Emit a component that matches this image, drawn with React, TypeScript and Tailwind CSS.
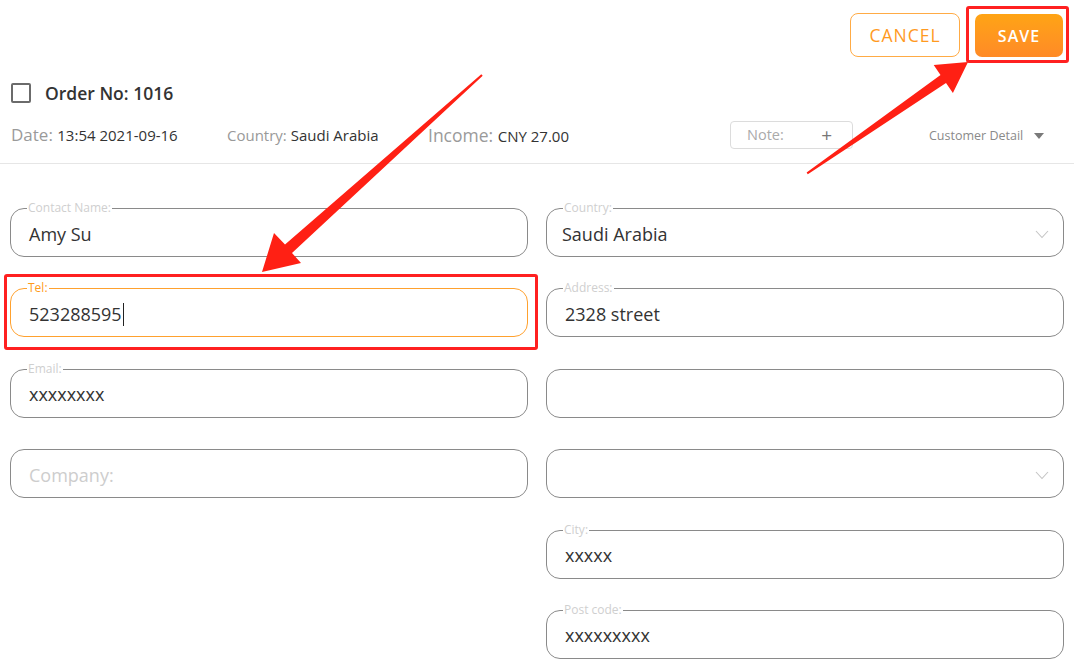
import React from "react";

type FieldProps = {
  label?: string;
  value?: string;
  placeholder?: string;
  active?: boolean;
  select?: boolean;
  caret?: boolean;
  pad?: string;
};

function Chevron() {
  return (
    <svg width="14" height="9" viewBox="0 0 14 9" className="ml-auto">
      <path d="M1 1 L7 7.5 L13 1" fill="none" stroke="#c4c4c4" strokeWidth="1.1" />
    </svg>
  );
}

function Field({ label, value, placeholder, active, select, caret, pad = "pl-[18px]" }: FieldProps) {
  return (
    <div
      className={`relative flex h-[49px] items-center rounded-[14px] border pt-[3px] ${pad} pr-[14px] ${
        active ? "border-[#ffa12e]" : "border-[#8a8a8a]"
      }`}
    >
      {label ? (
        <span
          className={`absolute left-[16px] top-[-8px] bg-white px-[1px] text-[12px] leading-[14px] ${
            active ? "text-[#ff9a1a]" : "text-[#cfcfcf]"
          }`}
        >
          {label}
        </span>
      ) : null}
      {value ? <span className="text-[18px] text-[#333]">{value}</span> : null}
      {caret ? <span className="ml-[1px] h-[23px] w-[1px] bg-[#222]" /> : null}
      {placeholder ? <span className="text-[18px] text-[#cdcdcd]">{placeholder}</span> : null}
      {select ? <Chevron /> : null}
    </div>
  );
}

export default function App() {
  return (
    <div
      className="relative h-[664px] w-[1074px] overflow-hidden bg-white"
      style={{ fontFamily: '"Open Sans", "Noto Sans", sans-serif' }}
    >
      {/* actions */}
      <div className="flex justify-end gap-[15px] pr-[11px] pt-[13px]">
        <button className="h-[44px] w-[110px] rounded-[8px] border border-[#ffab45] text-[17.5px] tracking-[1px] text-[#ff9a1f]">
          CANCEL
        </button>
        <button className="mt-[1px] h-[43px] w-[88px] rounded-[7px] bg-gradient-to-b from-[#ffa414] to-[#ff8a26] text-[16px] font-semibold tracking-[1px] text-white">
          SAVE
        </button>
      </div>

      {/* order header */}
      <div className="mt-[26px] flex h-[20px] items-center pl-[11px]">
        <span className="h-[20px] w-[20px] rounded-[2px] border-2 border-[#6b6b6b]" />
        <span className="ml-[14px] text-[17.5px] font-semibold text-[#333]">Order No: 1016</span>
      </div>

      <div className="mt-[18px] box-content flex h-[28px] items-center border-b border-[#e6e6e6] pb-[14px] pl-[11px]">
        <div className="w-[216px] whitespace-nowrap">
          <span className="text-[17px] text-[#9a9a9a]">Date: </span>
          <span className="text-[15px] text-[#333]">13:54 2021-09-16</span>
        </div>
        <div className="w-[201px] whitespace-nowrap">
          <span className="text-[15px] text-[#999]">Country: </span>
          <span className="text-[15px] text-[#333]">Saudi Arabia</span>
        </div>
        <div className="w-[302px] whitespace-nowrap">
          <span className="text-[17.5px] text-[#9a9a9a]">Income: </span>
          <span className="text-[15px] text-[#333]">CNY 27.00</span>
        </div>
        <div className="flex h-[28px] w-[123px] items-center rounded-[4px] border border-[#dcdcdc] pl-[16px] pr-[20px]">
          <span className="text-[14.5px] text-[#aaa]">Note:</span>
          <span className="ml-auto text-[19px] leading-none text-[#777]">+</span>
        </div>
        <div className="ml-[76px] flex items-center gap-[11px] pt-[2px]">
          <span className="text-[12.5px] text-[#8a8a8a]">Customer Detail</span>
          <svg width="10" height="7" viewBox="0 0 10 7">
            <path d="M0 0 H10 L5 6 Z" fill="#7a7a7a" />
          </svg>
        </div>
      </div>

      {/* form */}
      <div className="flex gap-[18px] pl-[10px] pt-[44px]">
        <div className="flex w-[518px] flex-col gap-y-[31.4px]">
          <Field label="Contact Name:" value="Amy Su" />
          <Field label="Tel:" value="523288595" active caret />
          <Field label="Email:" value="xxxxxxxx" />
          <Field placeholder="Company:" />
        </div>
        <div className="flex w-[518px] flex-col gap-y-[31.4px]">
          <Field label="Country:" value="Saudi Arabia" select pad="pl-[15px]" />
          <Field label="Address:" value="2328 street" />
          <Field />
          <Field select />
          <Field label="City:" value="xxxxx" />
          <Field label="Post code:" value="xxxxxxxxx" />
        </div>
      </div>

      {/* annotation overlays */}
      <div className="pointer-events-none absolute left-[966px] top-[6px] h-[57px] w-[103px] rounded-[3px] border-[3px] border-[#ff2020]" />
      <div className="pointer-events-none absolute left-[4px] top-[274px] h-[76px] w-[534px] rounded-[3px] border-[3px] border-[#ff2020]" />
      <svg className="pointer-events-none absolute left-0 top-0" width="1074" height="664">
        <polygon
          points="481.3,74.3 285,244.5 274,233 262,272 301,263 292,253 482.7,75.7"
          fill="#ff2014"
        />
        <polygon
          points="806.6,172.6 940.5,74.9 933.7,65 968,62 952.9,93 946,83.1 807.8,174.2"
          fill="#ff2014"
        />
      </svg>
    </div>
  );
}
